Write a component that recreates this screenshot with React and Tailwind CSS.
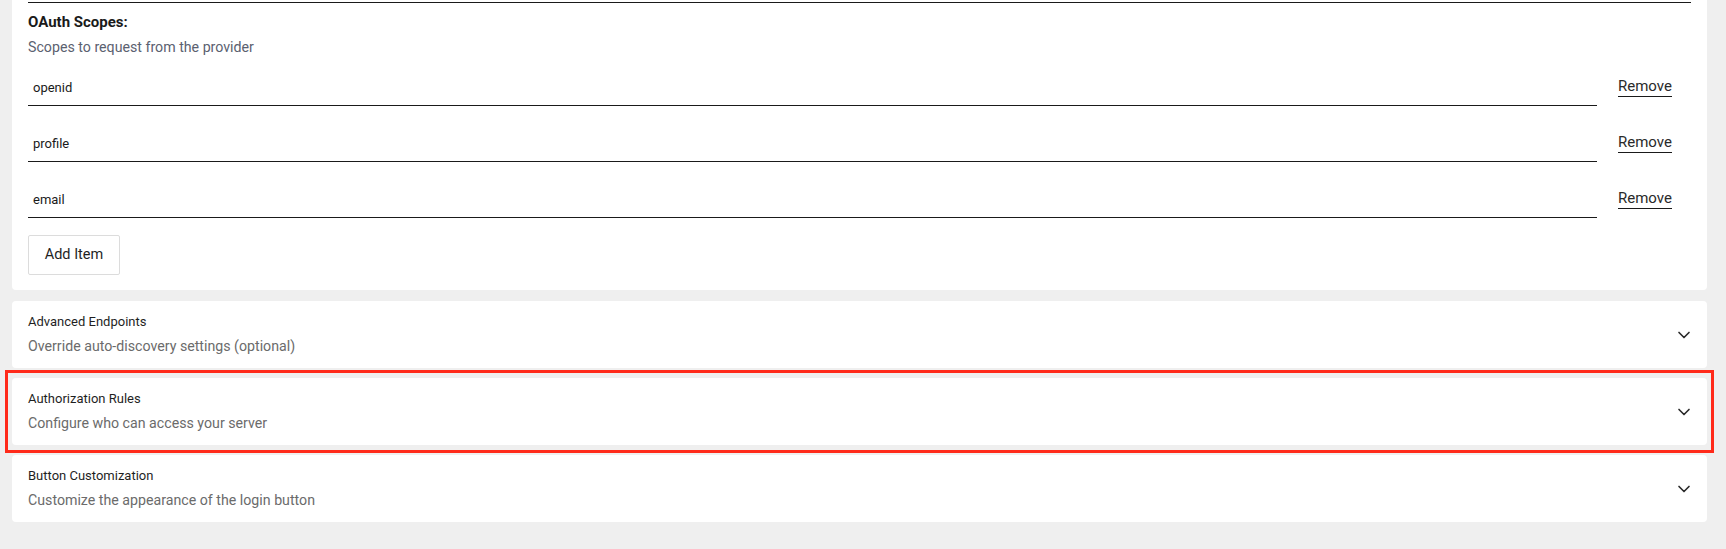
import { ChevronDown } from 'lucide-react';

const scopes = ['openid', 'profile', 'email'];

const sections = [
  { title: 'Advanced Endpoints', desc: 'Override auto-discovery settings (optional)' },
  { title: 'Authorization Rules', desc: 'Configure who can access your server', marked: true },
  { title: 'Button Customization', desc: 'Customize the appearance of the login button' },
];

function ScopeRow({ value }) {
  return (
    <div className="flex items-end gap-[21px]">
      <div className="flex-1 h-[36px] border-b border-[#1a1a1a] flex items-center px-[5px] text-[13px] text-[#1a1a1a]">
        {value}
      </div>
      <button className="w-[73px] h-[36px] flex items-center justify-start pb-[2px]">
        <span className="border-b border-[#1a1a1a] text-[15px] leading-[19px] text-[#2a2a2a]">Remove</span>
      </button>
    </div>
  );
}

function Section({ title, desc, marked }) {
  return (
    <div className="relative">
      <div className="bg-white rounded-[4px] h-[67px] pl-4 pr-[13px] flex items-center justify-between">
        <div className="flex flex-col gap-[5px]">
          <div className="text-[13px] leading-[18px] text-[#1f1f1f]">{title}</div>
          <div className="text-[14.2px] leading-[20px] text-[#6b6b6b]">{desc}</div>
        </div>
        <ChevronDown size={20} strokeWidth={2} className="text-[#2a2a2a]" />
      </div>
      {marked && (
        <div className="absolute -top-[8px] -bottom-[8px] -left-[7px] -right-[7px] border-[3px] border-[#ff2a1a] pointer-events-none" />
      )}
    </div>
  );
}

export default function App() {
  return (
    <div className="h-[549px] w-full bg-[#efefef] pl-[12px] pr-[19px] overflow-hidden" style={{ fontFamily: 'Roboto, "Noto Sans", sans-serif' }}>
      <div className="flex flex-col gap-[11px]">
        <div className="bg-white rounded-b-[4px] px-4 pb-[15px]">
          <div className="h-[3px] border-b border-[#1a1a1a]" />
          <div className="pt-[9px] text-[15px] leading-[20px] font-bold text-[#1a1a1a]">OAuth Scopes:</div>
          <div className="mt-[5px] text-[14.2px] leading-[20px] text-[#5b6170]">Scopes to request from the provider</div>
          <div className="mt-[13px] flex flex-col gap-[20px]">
            {scopes.map((s) => <ScopeRow key={s} value={s} />)}
          </div>
          <button className="mt-[17px] h-[40px] w-[92px] border border-[#dcdcdc] rounded-[2px] bg-white text-[14.5px] text-[#1f1f1f]">
            Add Item
          </button>
        </div>
        <div className="flex flex-col gap-[10px]">
          {sections.map((s) => <Section key={s.title} {...s} />)}
        </div>
      </div>
    </div>
  );
}
